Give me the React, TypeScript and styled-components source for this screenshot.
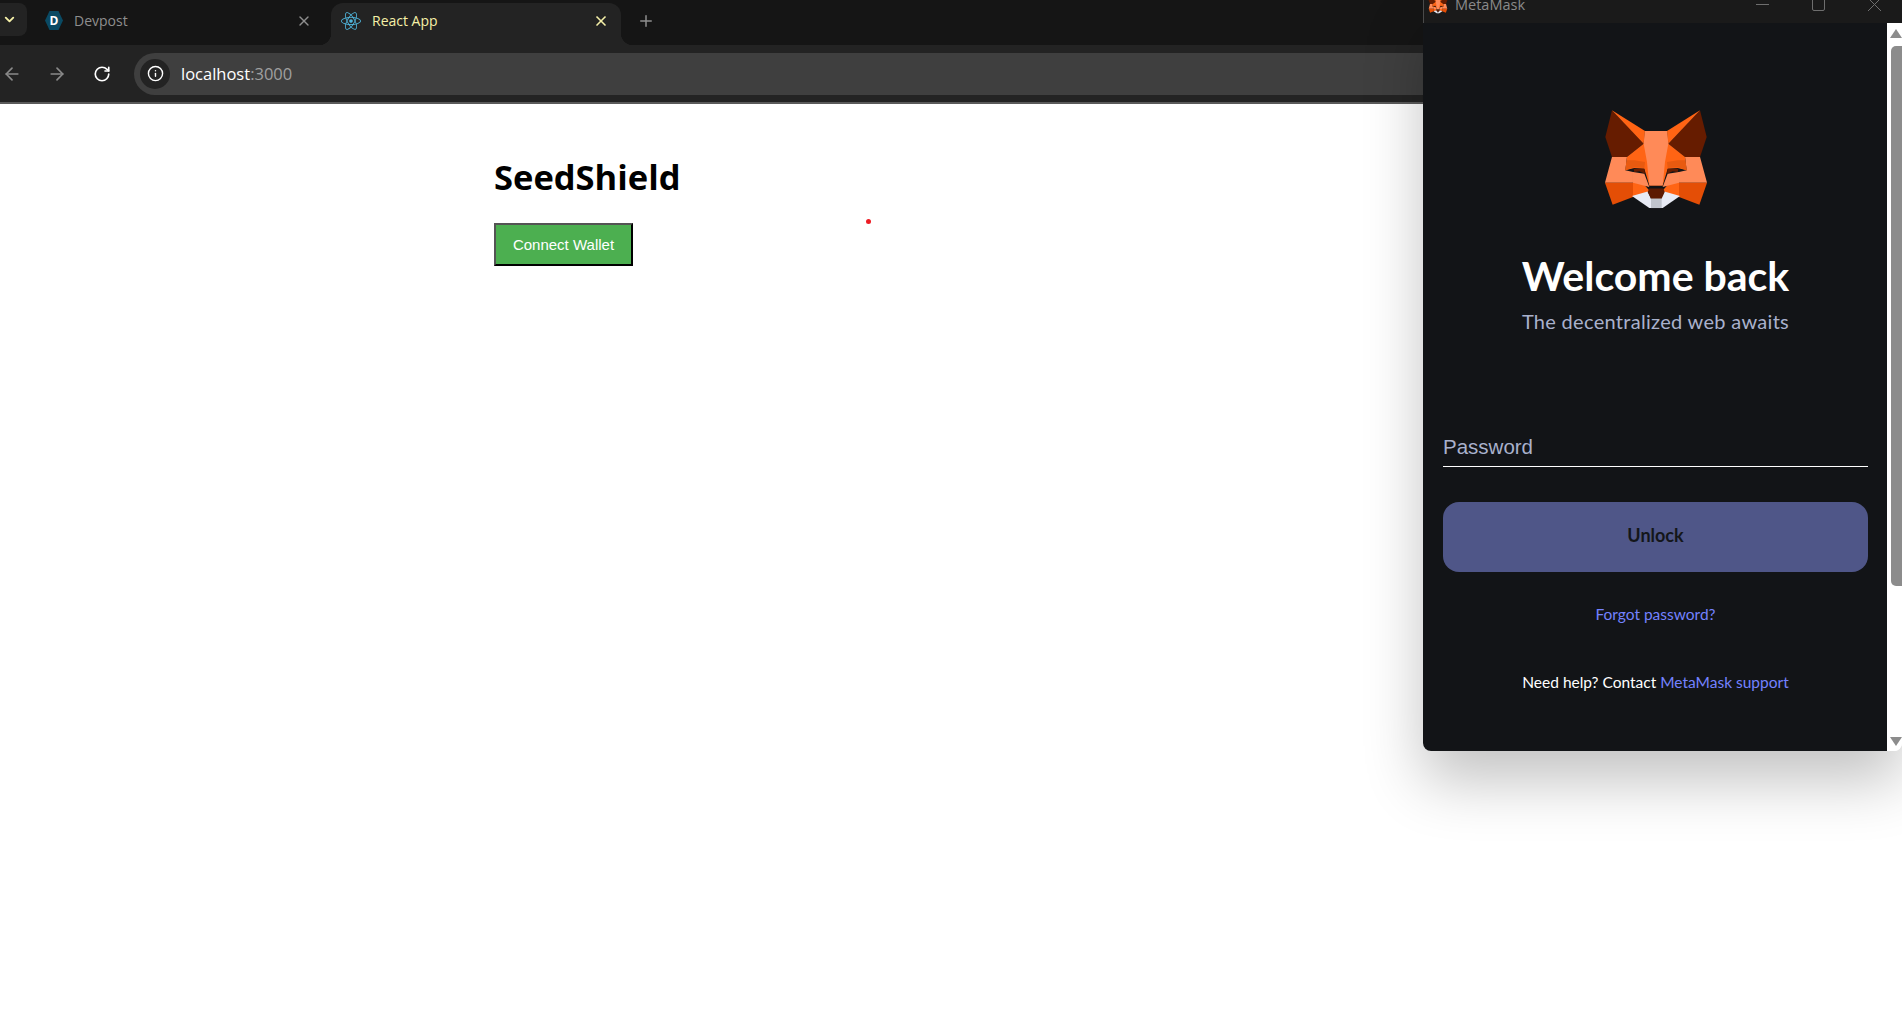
import React from "react"
import styled, { createGlobalStyle } from "styled-components"
import { ArrowLeft, ArrowRight, ChevronDown, Info, Plus, RotateCw, X } from "lucide-react"
import { FaReact } from "react-icons/fa"

const Global = createGlobalStyle`
  html, body { margin: 0; padding: 0; height: 100%; background: #fff; }
  #root { height: 100%; }
`

const Screen = styled.div`
  position: relative;
  width: 1902px;
  height: 1013px;
  overflow: hidden;
  display: flex;
  flex-direction: column;
  font-family: "Open Sans", "Noto Sans", sans-serif;
`

const TabStrip = styled.div`
  height: 45px;
  flex: none;
  display: flex;
  align-items: flex-start;
  background: #151515;
  padding-top: 3px;
  box-sizing: border-box;
`

const TabSearch = styled.div`
  width: 27px;
  height: 33px;
  flex: none;
  background: #232323;
  border-radius: 0 8px 8px 0;
  display: flex;
  align-items: center;
  padding-left: 2px;
  box-sizing: border-box;
  color: #f5f0a8;
`

const Tab = styled.div<{ $active?: boolean }>`
  position: relative;
  width: ${(p) => (p.$active ? "290px" : "304px")};
  height: 42px;
  flex: none;
  box-sizing: border-box;
  padding: ${(p) => (p.$active ? "0 12px 7px 10px" : "0 19px 7px 18px")};
  display: flex;
  align-items: center;
  gap: 11px;
  font-size: 14px;
  color: ${(p) => (p.$active ? "#f5f0a8" : "#8e8e8e")};
  background: ${(p) => (p.$active ? "#232323" : "transparent")};
  border-radius: 12px 12px 0 0;

  ${(p) =>
    p.$active &&
    `
    &::before, &::after {
      content: "";
      position: absolute;
      bottom: 0;
      width: 12px;
      height: 12px;
    }
    &::before { left: -12px; background: radial-gradient(circle at 0 0, transparent 12px, #232323 12.5px); }
    &::after { right: -12px; background: radial-gradient(circle at 100% 0, transparent 12px, #232323 12.5px); }
  `}
`

const TabTitle = styled.span`
  flex: 1;
`

const DevpostIcon = styled.span`
  width: 18px;
  height: 19px;
  flex: none;
  background: #0a4a63;
  clip-path: polygon(25% 0, 75% 0, 100% 50%, 75% 100%, 25% 100%, 0 50%);
  color: #fff;
  font-size: 12px;
  font-weight: 700;
  line-height: 19px;
  text-align: center;
`

const NewTab = styled.div`
  margin-left: 16px;
  height: 35px;
  display: flex;
  align-items: center;
  color: #8e8e8e;
`

const Toolbar = styled.div`
  height: 57px;
  flex: none;
  background: #232323;
  display: flex;
  align-items: center;
  box-sizing: border-box;
  padding-left: 2px;
`

const NavButton = styled.div<{ $on?: boolean }>`
  width: 20px;
  height: 20px;
  margin-right: 25px;
  color: ${(p) => (p.$on ? "#ffffff" : "#8a8a8a")};
  display: flex;
  align-items: center;
  justify-content: center;
`

const Omnibox = styled.div`
  flex: 1;
  height: 42px;
  margin-left: -3px;
  border-radius: 21px 0 0 21px;
  background: #3f3f3f;
  display: flex;
  align-items: center;
  padding-left: 6px;
  font-size: 16.5px;
  color: #fff;
`

const Chip = styled.div`
  width: 30px;
  height: 30px;
  border-radius: 50%;
  background: #232323;
  display: flex;
  align-items: center;
  justify-content: center;
  margin-right: 11px;
  color: #fff;
`

const Port = styled.span`
  color: #a0a0a0;
`

const Divider = styled.div`
  height: 2px;
  flex: none;
  background: #5a5a5a;
`

const Page = styled.main`
  flex: 1;
  background: #fff;
  padding: 51px 0 0 494px;
  position: relative;
`

const Title = styled.h1`
  margin: 0 0 24px;
  font-size: 34.5px;
  line-height: 44px;
  font-weight: 700;
  color: #000;
`

const ConnectButton = styled.button`
  display: block;
  width: 139px;
  height: 43px;
  padding: 0;
  background: #4caf50;
  border: 2px outset #000;
  color: #fff;
  font-family: "Liberation Sans", Arial, sans-serif;
  font-size: 15px;
`

const RedDot = styled.span`
  position: absolute;
  left: 866px;
  top: 115px;
  width: 5px;
  height: 5px;
  border-radius: 50%;
  background: #ed1c24;
`

const Popup = styled.section`
  position: absolute;
  left: 1423px;
  top: -14px;
  width: 479px;
  height: 765px;
  display: flex;
  flex-direction: column;
  border-radius: 0 0 8px 8px;
  overflow: hidden;
`

const PopupShadow = styled.div`
  position: absolute;
  left: 1423px;
  top: 0;
  width: 479px;
  height: 751px;
  border-radius: 0 0 8px 8px;
  box-shadow: 0 30px 60px rgba(0, 0, 0, 0.24);
`

const TitleBar = styled.header`
  height: 37px;
  flex: none;
  background: #1a1a1a;
  display: flex;
  align-items: center;
  padding-left: 4px;
  color: #8a8a8a;
  font-size: 14.5px;
  border-left: 1px solid #4a4a4a;
  box-sizing: border-box;
`

const TitleText = styled.span`
  margin-left: 7px;
  flex: 1;
`

const WinButton = styled.div`
  width: 56px;
  display: flex;
  justify-content: center;
  color: #6e6e6e;
`

const PopupBody = styled.div`
  flex: 1;
  display: flex;
  min-height: 0;
`

const Content = styled.div`
  flex: 1;
  background: #121417;
  padding: 84px 19px 0 20px;
  display: flex;
  flex-direction: column;
  align-items: center;
  font-family: Lato, "Open Sans", sans-serif;
`

const Heading = styled.h2`
  margin: 42px 0 0;
  font-size: 41px;
  line-height: 48px;
  font-weight: 700;
  color: #fff;
`

const Tagline = styled.p`
  margin: 8px 0 0;
  font-size: 20px;
  line-height: 26px;
  color: #a9b1cc;
  letter-spacing: 0.3px;
`

const PasswordField = styled.div`
  align-self: stretch;
  margin-top: 98px;
  height: 34px;
  border-bottom: 1px solid #fff;
  font-family: "Liberation Sans", Arial, sans-serif;
  font-size: 20.5px;
  line-height: 29px;
  color: #a9b1cc;
`

const UnlockButton = styled.button`
  align-self: stretch;
  margin-top: 35px;
  height: 70px;
  flex: none;
  border: 0;
  padding: 0 0 4px;
  border-radius: 16px;
  background: #4f5688;
  color: #14161a;
  font-family: Lato, sans-serif;
  font-size: 18px;
  font-weight: 700;
`

const Forgot = styled.a`
  margin-top: 31px;
  font-size: 15.5px;
  line-height: 22px;
  color: #7482ff;
`

const Help = styled.p`
  margin: 46px 0 0;
  font-size: 15.5px;
  line-height: 22px;
  color: #fff;
`

const HelpLink = styled.a`
  color: #7482ff;
`

const Scrollbar = styled.div`
  width: 15px;
  flex: none;
  background: #fff;
  display: flex;
  flex-direction: column;
  align-items: flex-end;
  padding: 6px 0 5px;
  box-sizing: border-box;
`

const Arrow = styled.span<{ $down?: boolean }>`
  width: 0;
  height: 0;
  border-left: 6px solid transparent;
  border-right: 6px solid transparent;
  ${(p) => (p.$down ? "border-top: 9px solid #8c8c8c;" : "border-bottom: 9px solid #8c8c8c;")}
  ${(p) => (p.$down ? "margin-top: auto;" : "")}
`

const Thumb = styled.div`
  width: 11px;
  height: 540px;
  margin-top: 8px;
  background: #8c8c8c;
  border-radius: 5px 0 0 5px;
`

const FoxSvg = styled.svg<{ $size: number }>`
  width: ${(p) => p.$size}px;
  height: ${(p) => p.$size * 0.94}px;
  flex: none;
  display: block;
`

const halves: [string, string][] = [
  ["#661c00", "333,95 313,175 333,235 378,235 428,195"],
  ["#ff6414", "333,95 432,157 428,195"],
  ["#ff8a58", "333,235 378,235 373,275 396,280 396,312 312,312"],
  ["#ff6414", "428,195 378,235 373,275 400,268 430,270 445,320 465,320 465,157 432,157"],
  ["#e85a10", "378,245 373,275 400,266 430,268 432,250 400,245"],
  ["#e44e06", "312,312 396,312 396,355 335,378"],
  ["#ff6414", "396,280 445,335 440,340 396,355"],
  ["#ff8a58", "432,157 465,157 465,320 445,320 438,250 428,195"],
  ["#ff8a58", "396,280 430,285 445,325 396,312"],
  ["#661c00", "398,270 430,270 432,285 415,278 400,280"],
  ["#e8ebf5", "393,352 440,338 450,360 450,388 445,388"],
]

const Fox = ({ size }: { size: number }) => (
  <FoxSvg $size={size} viewBox="305 85 320 310">
    {halves.map(([fill, points]) => (
      <React.Fragment key={points}>
        <polygon fill={fill} points={points} />
        <polygon
          fill={fill}
          points={points
            .split(" ")
            .map((pt) => {
              const [x, y] = pt.split(",").map(Number)
              return `${930 - x},${y}`
            })
            .join(" ")}
        />
      </React.Fragment>
    ))}
    <polygon fill="#c0c4cd" points="450,358 482,358 482,388 450,388" />
    <polygon fill="#5c1a02" points="445,329 487,329 491,340 482,359 450,359 440,340" />
  </FoxSvg>
)

export default function App() {
  return (
    <>
      <Global />
      <Screen>
        <TabStrip>
          <TabSearch>
            <ChevronDown size={15} strokeWidth={3} />
          </TabSearch>
          <Tab>
            <DevpostIcon>D</DevpostIcon>
            <TabTitle>Devpost</TabTitle>
            <X size={16} strokeWidth={2} />
          </Tab>
          <Tab $active>
            <FaReact size={20} color="#4fb3d9" />
            <TabTitle>React App</TabTitle>
            <X size={16} strokeWidth={2.5} />
          </Tab>
          <NewTab>
            <Plus size={18} />
          </NewTab>
        </TabStrip>
        <Toolbar>
          <NavButton>
            <ArrowLeft size={20} />
          </NavButton>
          <NavButton>
            <ArrowRight size={20} />
          </NavButton>
          <NavButton $on>
            <RotateCw size={18} strokeWidth={2.2} />
          </NavButton>
          <Omnibox>
            <Chip>
              <Info size={17} />
            </Chip>
            localhost<Port>:3000</Port>
          </Omnibox>
        </Toolbar>
        <Divider />
        <Page>
          <Title>SeedShield</Title>
          <ConnectButton>Connect Wallet</ConnectButton>
          <RedDot />
        </Page>
        <PopupShadow />
        <Popup>
          <TitleBar>
            <Fox size={20} />
            <TitleText>MetaMask</TitleText>
            <WinButton>
              <svg width="13" height="13" viewBox="0 0 13 13">
                <path d="M0 6.5h13" stroke="currentColor" />
              </svg>
            </WinButton>
            <WinButton>
              <svg width="13" height="13" viewBox="0 0 13 13">
                <rect x="0.5" y="0.5" width="12" height="12" rx="1.5" fill="none" stroke="currentColor" />
              </svg>
            </WinButton>
            <WinButton>
              <svg width="13" height="13" viewBox="0 0 13 13">
                <path d="M0 0l13 13M13 0L0 13" stroke="currentColor" />
              </svg>
            </WinButton>
          </TitleBar>
          <PopupBody>
            <Content>
              <Fox size={110} />
              <Heading>Welcome back</Heading>
              <Tagline>The decentralized web awaits</Tagline>
              <PasswordField>Password</PasswordField>
              <UnlockButton>Unlock</UnlockButton>
              <Forgot>Forgot password?</Forgot>
              <Help>
                Need help? Contact <HelpLink>MetaMask support</HelpLink>
              </Help>
            </Content>
            <Scrollbar>
              <Arrow />
              <Thumb />
              <Arrow $down />
            </Scrollbar>
          </PopupBody>
        </Popup>
      </Screen>
    </>
  )
}
